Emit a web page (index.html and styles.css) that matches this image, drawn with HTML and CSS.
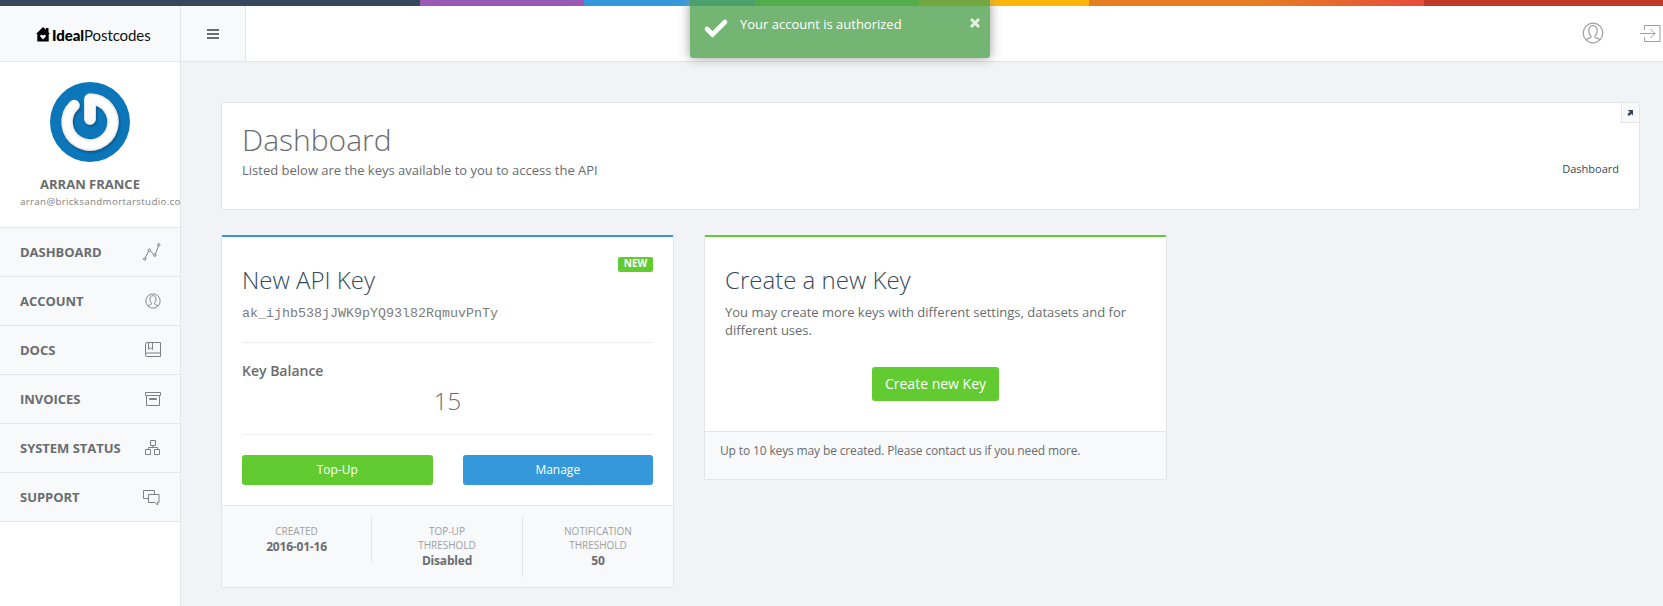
FILE: index.html
```html
<!DOCTYPE html>
<html lang="en">
<head>
<meta charset="utf-8">
<title>Dashboard</title>
<link rel="stylesheet" href="styles.css">
</head>
<body>
<svg class="defs" width="0" height="0" aria-hidden="true">
  <symbol id="user" viewBox="0 0 22 22"><g fill="none" stroke="currentColor" stroke-width="1.200"><circle cx="11" cy="11" r="9.800"/><path d="M4.200 17.900c.6-1.600 4.400-1.400 4.900-2.900.4-1.300-2.100-2.400-2.300-5.600C6.600 5.400 8.300 3.700 11 3.700s4.400 1.700 4.200 5.700c-.2 3.200-2.700 4.300-2.300 5.600.5 1.500 4.300 1.300 4.900 2.900"/></g></symbol>
</svg>
<div class="stripe"></div>
<header class="header">
  <div class="logo">
    <svg width="14" height="15" viewBox="0 0 14 15"><path d="M0 7 7 0l3 2.800V1h2.500v4.200L14 7h-1.300v7.500H1.300V7z" fill="#000"/><path d="M7 12.400 4.400 9.700c-.8-1.200.8-2.900 2.600-1.100 1.800-1.800 3.400-.1 2.600 1.100z" fill="#f7f9fa"/></svg>
    <span class="brand"><b>Ideal</b>Postcodes</span>
  </div>
  <div class="toggle"><i></i><i></i><i></i></div>
  <div class="tools">
    <svg width="22" height="22"><use href="#user"/></svg>
    <svg width="22" height="20" viewBox="0 0 22 20" fill="none" stroke="currentColor"><path d="M4.500 6V1.500h15.500v16H4.500V13M0 9.500h15M10.500 5l4.500 4.500-4.500 4.500"/></svg>
  </div>
</header>
<div class="page">
  <aside class="sidebar">
    <div class="profile">
      <svg class="avatar" width="80" height="80" viewBox="0 0 80 80">
        <defs>
          <filter id="shade" x="-20%" y="-20%" width="150%" height="150%"><feDropShadow dx="1" dy="1.500" stdDeviation="1.200" flood-color="#024" flood-opacity=".45"/></filter>
          <radialGradient id="tube" gradientUnits="userSpaceOnUse" cx="40" cy="40" r="29"><stop offset=".58" stop-color="#e6e4e4"/><stop offset=".7" stop-color="#fff"/><stop offset=".9" stop-color="#fff"/><stop offset="1" stop-color="#dedcdc"/></radialGradient>
        </defs>
        <circle cx="40" cy="40" r="40" fill="#0b76b9"/>
        <path d="M40 37V17A23 23 0 1 1 24 23.500" fill="none" stroke="url(#tube)" stroke-width="11.500" stroke-linecap="round" stroke-linejoin="round" filter="url(#shade)"/>
        <path d="M40 37V19" stroke="#fbfafa" stroke-width="11" stroke-linecap="round"/>
      </svg>
      <div class="name">ARRAN FRANCE</div>
      <div class="mail">arran@bricksandmortarstudio.co</div>
    </div>
    <nav class="menu">
      <a>DASHBOARD<svg width="18" height="18" viewBox="0 0 18 18"><path d="m2.300 14.900 3.400-6.700m1.800-.1 3.700 3.800m1.200-1 3.100-8"/><circle cx="1.800" cy="16" r="1.200"/><circle cx="6.300" cy="7.300" r="1.200"/><circle cx="11.800" cy="12.200" r="1.200"/><circle cx="15.800" cy="1.800" r="1.200"/></svg></a>
      <a>ACCOUNT<svg width="16" height="16"><use href="#user"/></svg></a>
      <a>DOCS<svg width="16" height="16" viewBox="0 0 16 16"><path d="M2 .5h13.500v14H2A1.500 1.500 0 0 1 .5 13V2A1.500 1.500 0 0 1 2 .5zM.5 12.500A1.500 1.500 0 0 1 2 11h13.500M3.500.5v7l2-2 2 2v-7"/></svg></a>
      <a>INVOICES<svg width="16" height="16" viewBox="0 0 16 16"><path d="M.5 1.500h15v3H.5zM1.500 4.500v10h13v-10M4.500 7.500h7v1h-7z"/></svg></a>
      <a>SYSTEM STATUS<svg width="16" height="16" viewBox="0 0 16 16"><path d="M5.500.5h5v5h-5zM.5 9.500h5v5h-5zM9.500 9.500h5v5h-5zM8 5.500v2M3.500 9.500v-2h9v2"/></svg></a>
      <a>SUPPORT<svg width="18" height="17" viewBox="0 0 18 17"><path d="M5.500 9.500h-5v-8h11v4M5.500 5.500h10.500v8h-1.500v2.500l-2.500-2.500h-6.500z"/></svg></a>
    </nav>
  </aside>
  <main class="content">
    <section class="panel hero">
      <div>
        <h2>Dashboard</h2>
        <p>Listed below are the keys available to you to access the API</p>
      </div>
      <span class="crumb">Dashboard</span>
      <span class="corner"><svg width="6" height="6" viewBox="0 0 6 6"><path d="M.5 0H6v5.500L4.500 4 2 6 .3 4.500 2.800 1.800z" fill="#34495e"/></svg></span>
    </section>
    <div class="cards">
      <section class="card key">
        <div class="body">
          <span class="badge">NEW</span>
          <h3>New API Key</h3>
          <code>ak_ijhb538jJWK9pYQ93l82RqmuvPnTy</code>
          <div class="balance">
            <h4>Key Balance</h4>
            <div class="amount">15</div>
          </div>
          <div class="buttons"><button class="btn">Top-Up</button><button class="btn blue">Manage</button></div>
        </div>
        <footer class="stats">
          <div>CREATED<strong>2016-01-16</strong></div>
          <div>TOP-UP<br>THRESHOLD<strong>Disabled</strong></div>
          <div>NOTIFICATION<br>THRESHOLD<strong>50</strong></div>
        </footer>
      </section>
      <section class="card create">
        <div class="body">
          <h3>Create a new Key</h3>
          <p>You may create more keys with different settings, datasets and for different uses.</p>
          <button class="btn large">Create new Key</button>
        </div>
        <footer class="note">Up to 10 keys may be created. Please contact us if you need more.</footer>
      </section>
    </div>
  </main>
</div>
<div class="toast">
  <svg width="26" height="20" viewBox="0 0 26 20"><path d="m4 11 5.500 5.500L22 4" fill="none" stroke="#fff" stroke-width="4.600" stroke-linecap="round"/></svg>
  <span>Your account is authorized</span>
  <svg class="close" width="10" height="10" viewBox="0 0 10 10"><path d="m1 1 8 8m0-8-8 8" stroke="#fff" stroke-width="3" opacity=".8"/></svg>
</div>
</body>
</html>
```
FILE: styles.css
```css
* { box-sizing: border-box; }
body {
  margin: 0;
  height: 606px;
  overflow: hidden;
  background: #f1f3f6;
  color: #6a6c6f;
  font: 13px/18px "Open Sans", "Noto Sans", sans-serif;
}
h2, h3, h4, p { margin: 0; }
svg { flex: none; display: block; }
.defs { position: absolute; }
.stripe {
  height: 6px;
  background: linear-gradient(to right, #34495e 420px, #9b59b6 420px, #9b59b6 584px, #3498db 584px, #3498db 755px, #62cb31 755px, #62cb31 919px, #ffb606 919px, #ffb606 1089px, #e67e22 1089px, #e67e22 1260px, #e74c3c 1424px, #c0392b 1424px);
}
.header {
  display: flex;
  height: 56px;
  background: #fff;
  border-bottom: 1px solid #e4e5e7;
}
.logo {
  display: flex;
  width: 181px;
  padding: 21px 0 0 36px;
  gap: 2px;
  background: #f7f9fa;
  border-right: 1px solid #e4e5e7;
}
.brand { font: 15px/17px Lato, sans-serif; color: #111; letter-spacing: -.08px; }
.brand b { font-weight: 900; color: #000; }
.toggle {
  width: 65px;
  padding: 23px 0 0 26px;
  background: #f7f9fa;
  border-right: 1px solid #e4e5e7;
}
.toggle i { display: block; width: 12px; height: 2px; margin-bottom: 2px; background: #6a6c6f; }
.tools { display: flex; align-items: flex-start; margin-left: auto; padding: 16px 1px 0 0; gap: 36px; color: #9d9fa2; }
.tools svg + svg { margin-top: 2px; }
.page { display: flex; height: 544px; }
.sidebar { flex: none; width: 181px; background: #fff; border-right: 1px solid #e4e5e7; overflow: hidden; }
.profile { height: 165px; padding-top: 20px; text-align: center; }
.avatar { margin: 0 auto; }
.name { margin-top: 13px; font-weight: 700; }
.mail { margin: 1px 0 0 20px; font-size: 9.800px; line-height: 15px; text-align: left; white-space: nowrap; color: #808285; letter-spacing: .3px; }
.menu { border-top: 1px solid #e4e5e7; }
.menu a {
  display: flex;
  align-items: center;
  justify-content: space-between;
  height: 49px;
  padding: 0 19px 0 20px;
  background: #f7f9fa;
  border-bottom: 1px solid #e4e5e7;
  font-weight: 700;
  letter-spacing: -.03px;
}
.menu svg { fill: none; stroke: #7d8087; stroke-width: 1; color: #74767b; }
.content { flex: 1; padding: 40px 23px 0 40px; }
.panel { background: #fff; border: 1px solid #e4e5e7; border-radius: 2px; }
.hero {
  position: relative;
  display: flex;
  justify-content: space-between;
  height: 108px;
  padding: 20px;
}
h2 { font-size: 30px; line-height: 34px; font-weight: 300; }
.hero p { margin-top: 4px; }
.crumb { margin-top: 37px; font-size: 11px; color: #34495e; }
.corner {
  position: absolute;
  top: 0;
  right: 0;
  display: grid;
  place-items: center;
  width: 18px;
  height: 20px;
  padding-right: 1px;
  background: #f7f9fa;
  border: solid #e4e5e7;
  border-width: 0 0 1px 1px;
}
.cards { display: flex; align-items: flex-start; gap: 30px; margin-top: 25px; }
.card { border: 1px solid #e4e5e7; border-top: 2px solid #3498db; border-radius: 2px; background: #fff; }
.key { width: 453px; }
.create { width: 463px; border-top-color: #62cb31; }
.body { position: relative; padding: 28px 20px 20px; height: 268px; }
.create .body { height: 194px; }
h3 { font-size: 24px; line-height: 30px; font-weight: 300; color: #34495e; }
.badge {
  position: absolute;
  top: 20px;
  right: 20px;
  width: 35px;
  height: 15px;
  border-radius: 2px;
  background: #62cb31;
  color: #fff;
  font-size: 10px;
  line-height: 13px;
  font-weight: 700;
  text-align: center;
}
code { display: block; margin-top: 10px; font: 13.330px/18px "Liberation Mono", monospace; color: #7b7d80; }
.balance { height: 93px; margin: 19px 0 20px; padding-top: 18px; border: solid #eee; border-width: 1px 0; }
h4 { font-size: 14px; line-height: 20px; font-weight: 600; }
.amount { font-size: 24px; line-height: 30px; font-weight: 300; text-align: center; margin-top: 5px; }
.buttons { display: flex; gap: 30px; }
.btn {
  flex: 1;
  height: 30px;
  padding: 0;
  border: 0;
  border-radius: 3px;
  background: #62cb31;
  color: #fff;
  font: 500 12px/18px "Open Sans", sans-serif;
}
.blue { background: #3498db; }
.create p { margin-top: 8px; }
.large { display: block; width: 127px; height: 34px; margin: 28px auto 0; font-size: 14px; }
.stats, .note { background: #f7f9fa; border-top: 1px solid #e4e5e7; }
.stats { display: grid; grid-template-columns: 150px 151px 150px; align-items: start; padding: 10px 0; }
.stats div {
  padding: 8px 10px 9px;
  font-size: 10px;
  line-height: 14px;
  text-align: center;
  color: #9d9fa2;
  border-right: 1px solid #e4e5e7;
}
.stats div:last-child { border: 0; }
.stats strong { display: block; padding-top: 1px; font-size: 12px; line-height: 15px; font-weight: 700; color: #6a6c6f; letter-spacing: -.2px; }
.note { height: 48px; padding: 10px 15px; font-size: 12px; letter-spacing: -.14px; }
.toast {
  position: absolute;
  top: 0;
  left: 690px;
  display: flex;
  width: 300px;
  height: 58px;
  padding: 15px 10px 0 13px;
  border-radius: 0 0 3px 3px;
  background: rgba(81, 163, 81, .8);
  box-shadow: 0 0 12px #999;
  color: #fff;
  font-weight: 500;
}
.toast > svg:first-child { margin-top: 3px; }
.toast span { margin-left: 11px; }
.toast .close { margin: 3px 0 0 auto; }
```
